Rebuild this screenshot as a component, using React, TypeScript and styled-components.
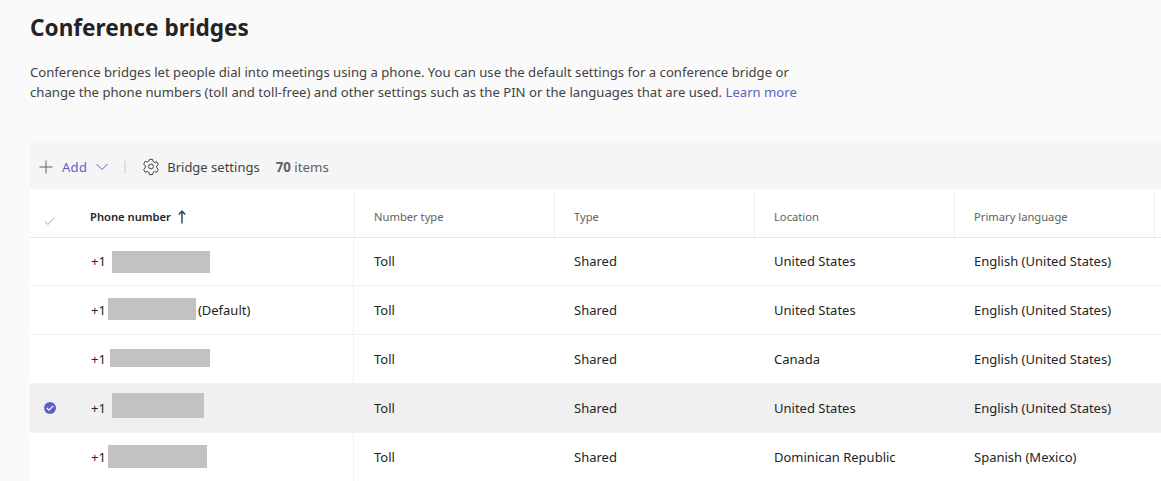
import styled, { createGlobalStyle } from 'styled-components';

const GlobalStyle = createGlobalStyle`
  html, body {
    margin: 0;
    padding: 0;
    height: 481px;
    overflow: hidden;
    background: #fafafa;
    font-family: "Noto Sans", "Open Sans", sans-serif;
    color: #242424;
  }
`;

type Row = {
  redactGap: number;
  redactWidth: number;
  redactHeight: number;
  redactShift: number;
  isDefault?: boolean;
  selected?: boolean;
  location: string;
  language: string;
};

const rows: Row[] = [
  { redactGap: 6, redactWidth: 98, redactHeight: 22, redactShift: 1, location: 'United States', language: 'English (United States)' },
  { redactGap: 2, redactWidth: 88, redactHeight: 22, redactShift: -1, isDefault: true, location: 'United States', language: 'English (United States)' },
  { redactGap: 4, redactWidth: 100, redactHeight: 18, redactShift: -1, location: 'Canada', language: 'English (United States)' },
  { redactGap: 6, redactWidth: 92, redactHeight: 25, redactShift: -3, selected: true, location: 'United States', language: 'English (United States)' },
  { redactGap: 2, redactWidth: 99, redactHeight: 23, redactShift: -1, location: 'Dominican Republic', language: 'Spanish (Mexico)' },
];

const App = () => (
  <Page>
    <GlobalStyle />
    <Title>Conference bridges</Title>
    <Description>
      Conference bridges let people dial into meetings using a phone. You can use the default settings for a conference bridge or
      change the phone numbers (toll and toll-free) and other settings such as the PIN or the languages that are used.{' '}
      <LearnMore href="#">Learn more</LearnMore>
    </Description>
    <Toolbar>
      <AddButton>
        <svg width="14" height="14" viewBox="0 0 14 14" fill="none" stroke="#616161" strokeWidth="1">
          <path d="M7 .5v13M.5 7h13" />
        </svg>
        <AddLabel>Add</AddLabel>
        <svg width="14" height="8" viewBox="0 0 14 8" fill="none" stroke="#5b5fc7" strokeWidth="1">
          <path d="M1.5 1l5.5 5.5L12.5 1" />
        </svg>
      </AddButton>
      <Divider />
      <SettingsButton>
        <svg width="18" height="18" viewBox="0 0 18 18" fill="none" stroke="#424242" strokeWidth="1">
          <path d="M7.4 1.4h3.2l.5 2.2 1.5.9 2.2-.7 1.6 2.8-1.7 1.5v1.8l1.7 1.5-1.6 2.8-2.2-.7-1.5.9-.5 2.2H7.4l-.5-2.2-1.5-.9-2.2.7-1.6-2.8 1.7-1.5V7.6L1.6 6.1l1.6-2.8 2.2.7 1.5-.9z" />
          <circle cx="9" cy="8.5" r="2.4" />
        </svg>
        Bridge settings
      </SettingsButton>
      <ItemCount>
        <strong>70</strong> items
      </ItemCount>
    </Toolbar>
    <Table>
      <HeaderRow>
        <HeaderCheckCell>
          <svg width="12" height="9" viewBox="0 0 12 9" fill="none" stroke="#9aa3b0" strokeWidth="1">
            <path d="M1 4.5l2.8 3L10.5 1" />
          </svg>
        </HeaderCheckCell>
        <PhoneHeader>
          Phone number
          <svg width="10" height="14" viewBox="0 0 10 14" fill="none" stroke="#2b4a78" strokeWidth="1.5">
            <path d="M5 13.5V1.5M1.8 4.5L5 1.2l3.2 3.3" />
          </svg>
        </PhoneHeader>
        <HeaderCell>Number type</HeaderCell>
        <HeaderCell>Type</HeaderCell>
        <HeaderCell>Location</HeaderCell>
        <HeaderCell>Primary language</HeaderCell>
        <HeaderCell />
      </HeaderRow>
      {rows.map((row, i) => (
        <BodyRow key={i} $selected={row.selected}>
          <CheckCell>
            {row.selected && (
              <SelectedMark>
                <svg width="8" height="6" viewBox="0 0 8 6" fill="none" stroke="#fff" strokeWidth="1.2">
                  <path d="M.8 3l2.2 2.1L7.2.8" />
                </svg>
              </SelectedMark>
            )}
          </CheckCell>
          <PhoneCell>
            +1
            <Redaction $gap={row.redactGap} $width={row.redactWidth} $height={row.redactHeight} $shift={row.redactShift} />
            {row.isDefault && <DefaultTag>(Default)</DefaultTag>}
          </PhoneCell>
          <Cell>Toll</Cell>
          <Cell>Shared</Cell>
          <Cell>{row.location}</Cell>
          <Cell>{row.language}</Cell>
          <Cell />
        </BodyRow>
      ))}
    </Table>
  </Page>
);

const Page = styled.div`
  height: 481px;
  padding: 14px 0 0 30px;
  box-sizing: border-box;
  overflow: hidden;
`;

const Title = styled.h1`
  margin: 0;
  font-size: 22.6px;
  line-height: 28px;
  font-weight: 700;
  color: #242424;
`;

const Description = styled.p`
  width: 800px;
  margin: 20px 0 0;
  font-size: 13.14px;
  line-height: 20px;
  color: #424242;
`;

const LearnMore = styled.a`
  color: #5b5fc7;
  text-decoration: none;
`;

const Toolbar = styled.div`
  display: flex;
  align-items: center;
  height: 48px;
  box-sizing: border-box;
  margin-top: 39px;
  padding: 4px 0 0 9px;
  background: #f5f5f5;
  font-size: 13px;
`;

const AddButton = styled.div`
  display: flex;
  align-items: center;
  color: #5b5fc7;
`;

const AddLabel = styled.span`
  margin: 0 8px 0 9px;
  letter-spacing: 0.3px;
`;

const Divider = styled.div`
  width: 2px;
  height: 13px;
  margin: 0 16px 0 15px;
  background: #e0e0e0;
`;

const SettingsButton = styled.div`
  display: flex;
  align-items: center;
  gap: 7px;
  color: #424242;
`;

const ItemCount = styled.div`
  margin-left: 16px;
  font-size: 13.3px;
  color: #616161;
`;

const Table = styled.div`
  background: #fff;
`;

const columns = `60px 264px 200px 200px 200px 200px 1fr`;

const HeaderRow = styled.div`
  display: grid;
  grid-template-columns: ${columns};
  height: 49px;
  box-sizing: border-box;
  border-bottom: 1px solid #e6e6e6;
  box-shadow: 0 1px 2px rgba(0, 0, 0, 0.04);
`;

const BodyRow = styled.div<{ $selected?: boolean }>`
  display: grid;
  grid-template-columns: ${columns};
  height: 49px;
  box-sizing: border-box;
  border-bottom: 1px solid #f0f0f0;
  background: ${(p) => (p.$selected ? '#f0f0f0' : '#fff')};

  &:nth-child(2) {
    height: 48px;
    padding-bottom: 1px;
  }
`;

const CheckCell = styled.div`
  display: flex;
  align-items: center;
  justify-content: center;
  padding: 0 20px 0 0;
`;

const HeaderCheckCell = styled(CheckCell)`
  padding: 16px 20px 0 0;
`;

const HeaderCell = styled.div`
  display: flex;
  align-items: center;
  padding: 7px 0 0 19px;
  border-left: 1px solid #f0f0f0;
  font-size: 11.2px;
  color: #616161;
`;

const PhoneHeader = styled.div`
  display: flex;
  align-items: center;
  gap: 6px;
  padding-top: 7px;
  font-size: 11.2px;
  font-weight: 600;
  color: #242424;
`;

const Cell = styled.div`
  display: flex;
  align-items: center;
  padding-left: 20px;
  font-size: 13px;
  color: #242424;
`;

const PhoneCell = styled.div`
  display: flex;
  align-items: center;
  padding-left: 1px;
  border-right: 1px solid #f0f0f0;
  font-size: 13px;
  color: #242424;
`;

const Redaction = styled.span<{ $gap: number; $width: number; $height: number; $shift: number }>`
  width: ${(p) => p.$width}px;
  height: ${(p) => p.$height}px;
  margin-left: ${(p) => p.$gap}px;
  transform: translateY(${(p) => p.$shift}px);
  background: #c2c2c2;
`;

const DefaultTag = styled.span`
  margin-left: 2px;
`;

const SelectedMark = styled.span`
  display: flex;
  align-items: center;
  justify-content: center;
  width: 12px;
  height: 12px;
  border-radius: 50%;
  background: #5b5fc7;
`;

export default App;
